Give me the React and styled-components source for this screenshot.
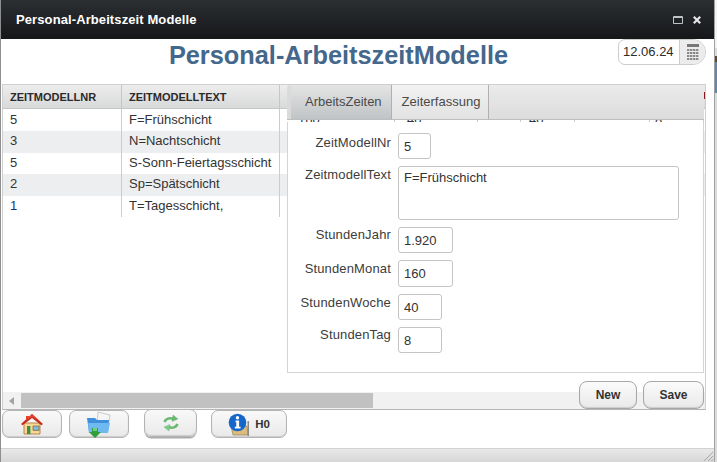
import React from 'react'
import styled, { createGlobalStyle } from 'styled-components'

const rows = [
  { nr: '5', text: 'F=Frühschicht', height: 22, line: 21, extra: ['160', '40', '', '40', '', '8'] },
  { nr: '3', text: 'N=Nachtschicht', height: 22, line: 20 },
  { nr: '5', text: 'S-Sonn-Feiertagsschicht', height: 21, line: 20 },
  { nr: '2', text: 'Sp=Spätschicht', height: 22, line: 20 },
  { nr: '1', text: 'T=Tagesschicht,', height: 21, line: 20, blue: true },
]

// columns that run on behind the tab panel
const hiddenColumns = [
  { width: 115, pad: 18 },
  { width: 83, pad: 12 },
  { width: 43, pad: 0 },
  { width: 54, pad: 8 },
  { width: 75, pad: 0 },
  { width: 54, pad: 5 },
]

const fields = [
  { label: 'ZeitModellNr', value: '5', width: 33, height: 26, labelTop: 2 },
  { label: 'ZeitmodellText', value: 'F=Frühschicht', width: 281, height: 54, area: true, labelTop: 1 },
  { label: 'StundenJahr', value: '1.920', width: 55, height: 26, labelTop: 0 },
  { label: 'StundenMonat', value: '160', width: 55, height: 27, labelTop: 1 },
  { label: 'StundenWoche', value: '40', width: 44, height: 26, labelTop: 1 },
  { label: 'StundenTag', value: '8', width: 44, height: 26, labelTop: 0 },
]

const GlobalStyle = createGlobalStyle`
  html, body {
    margin: 0;
    padding: 0;
    background: #fff;
    overflow: hidden;
  }
  body {
    font-family: "Liberation Sans", Arial, sans-serif;
    font-size: 13px;
    color: #333;
  }
`

const Page = styled.div`
  width: 717px;
  height: 462px;
  display: flex;
  background: #fff;
`

const Window = styled.div`
  width: 715px;
  height: 462px;
  flex: none;
  display: flex;
  flex-direction: column;
  box-sizing: border-box;
  border-left: 1px solid #8e8e8e;
  border-right: 1px solid #a0a0a0;
  background: #fff;
`

const Neighbour = styled.div`
  flex: 1;
  background: linear-gradient(
    #f4f4f4 0 48px,
    #dcdcdc 48px 56px,
    #5b4a2a 56px 62px,
    #5f86ad 62px 93px,
    #dcdcdc 93px
  );
`

const TitleBar = styled.div`
  height: 39px;
  flex: none;
  display: flex;
  align-items: center;
  justify-content: space-between;
  padding: 0 13px 0 15px;
  background: linear-gradient(#2c2f32, #151719);
  color: #fff;
  font-size: 13px;
  font-weight: bold;
  letter-spacing: 0.1px;
`

const WindowControls = styled.div`
  display: flex;
  align-items: center;
  gap: 10px;
`

const Heading = styled.div`
  height: 45px;
  flex: none;
  position: relative;
  display: flex;
  justify-content: center;
  box-sizing: border-box;
  padding-right: 38px;
  h1 {
    margin: 1px 0 0;
    font-size: 25.33px;
    line-height: 30px;
    font-weight: bold;
    color: #44688c;
  }
`

const DateBox = styled.div`
  position: absolute;
  left: 617px;
  top: 0;
  width: 88px;
  height: 26px;
  display: flex;
  box-sizing: border-box;
  border: 1px solid #ccc;
  border-radius: 7px 13px 13px 7px;
  overflow: hidden;
  background: #fff;
`

const DateText = styled.div`
  flex: 1;
  padding-left: 4px;
  line-height: 24px;
  font-size: 13px;
  color: #2c2c2c;
`

const DateButton = styled.div`
  width: 25px;
  border-left: 1px solid #ccc;
  background: #ececec;
  display: flex;
  align-items: center;
  justify-content: center;
`

const Content = styled.div`
  position: relative;
  flex: 1;
  min-height: 0;
  padding-left: 1px;
`

const Grid = styled.div`
  width: 704px;
  height: 326px;
  box-sizing: border-box;
  border: 1px solid #cfcfcf;
  border-bottom: 1px solid #b5b5b5;
  display: flex;
  flex-direction: column;
  overflow: hidden;
`

const GridHead = styled.div`
  height: 23px;
  flex: none;
  display: flex;
  background: linear-gradient(#ededed, #d8d9da);
  border-bottom: 1px solid #c6c6c6;
`

const HeadCell = styled.div`
  width: ${(p) => p.$width}px;
  flex: none;
  box-sizing: border-box;
  padding-left: 7px;
  border-right: 1px solid #c6c6c6;
  font-size: 11px;
  font-weight: bold;
  line-height: 24px;
  color: #2a2a2a;
  white-space: nowrap;
`

const HeadFiller = styled.div`
  width: 424px;
  flex: none;
`

const HeadMark = styled.div`
  width: 2px;
  height: 7px;
  margin-top: 7px;
  flex: none;
  background: #8a1c1c;
`

const GridBody = styled.div`
  flex: 1;
  min-height: 0;
`

const GridRow = styled.div`
  height: ${(p) => p.$height}px;
  display: flex;
  background: ${(p) => (p.$odd ? '#edeef0' : '#fff')};
`

const Cell = styled.div`
  width: ${(p) => p.$width}px;
  flex: none;
  box-sizing: border-box;
  padding-left: ${(p) => p.$pad ?? 7}px;
  border-right: 1px solid #ccc;
  font-size: 13px;
  line-height: ${(p) => p.$line}px;
  color: ${(p) => (p.$blue ? '#1a2f7a' : '#333')};
  white-space: nowrap;
`

const ScrollTrack = styled.div`
  height: 17px;
  flex: none;
  display: flex;
  align-items: center;
  background: #f1f1f1;
`

const ScrollArrow = styled.div`
  width: 0;
  height: 0;
  margin: 0 6px 0 6px;
  border-style: solid;
  border-width: 4px 5px 4px 0;
  border-color: transparent #a3a3a3 transparent transparent;
`

const ScrollThumb = styled.div`
  width: 352px;
  height: 15px;
  margin-left: 1px;
  background: #c1c1c1;
`

const Panel = styled.div`
  position: absolute;
  left: 286px;
  top: 1px;
  width: 417px;
  height: 288px;
  display: flex;
  flex-direction: column;
`

const TabStrip = styled.div`
  height: 34px;
  flex: none;
  display: flex;
  background: linear-gradient(#ebebeb, #dcdcdc);
  border-bottom: 1px solid #bdbdbd;
`

const Tab = styled.div`
  box-sizing: border-box;
  padding: ${(p) => (p.$active ? '0 9px 0 14px' : '0 8px 0 10px')};
  line-height: 34px;
  font-size: 13px;
  border-right: 1px solid #b0b0b0;
  color: #4a4a4a;
  background: ${(p) =>
    p.$active
      ? 'linear-gradient(#e4e4e4, #c0c4c6)'
      : 'linear-gradient(#f2f2f2, #e2e2e2)'};
  ${(p) => p.$active && 'border-left: 4px solid #dadada; border-radius: 4px 0 0 0;'}
`

const TabBody = styled.div`
  flex: 1;
  min-height: 0;
  margin-top: 2px;
  box-sizing: border-box;
  background: #fff;
  border: 1px solid #d4d4d4;
  border-top: none;
  padding-top: 11px;
  display: flex;
  flex-direction: column;
  gap: 7px;
`

const FormRow = styled.div`
  display: grid;
  grid-template-columns: 103px 1fr;
  column-gap: 7px;
  align-items: start;
`

const Label = styled.div`
  text-align: right;
  font-size: 13px;
  letter-spacing: 0.15px;
  padding-top: ${(p) => p.$top}px;
  color: #3c3c3c;
`

const Field = styled.div`
  width: ${(p) => p.$width}px;
  height: ${(p) => p.$height}px;
  box-sizing: border-box;
  border: 1px solid #c4c4c4;
  border-radius: 3px;
  padding: ${(p) => (p.$area ? '3px 5px' : '5px 5px')};
  font-size: 13px;
  line-height: 15px;
  color: #333;
`

const Actions = styled.div`
  position: absolute;
  right: 10px;
  top: 297px;
  display: flex;
  gap: 6px;
`

const ActionButton = styled.button`
  width: ${(p) => p.$width}px;
  height: 28px;
  padding: 0;
  border: 1px solid #a8a8a8;
  border-radius: 8px;
  background: linear-gradient(#fbfbfb, #e9e9e9);
  box-shadow: inset 0 -1px 1px #ccc;
  font-family: inherit;
  font-size: 12px;
  font-weight: bold;
  color: #333;
`

const Toolbar = styled.div`
  height: 38px;
  flex: none;
  display: flex;
  align-items: flex-start;
  padding-left: 1px;
  box-sizing: border-box;
`

const ToolButton = styled.div`
  width: ${(p) => p.$width}px;
  height: 28px;
  margin: ${(p) => (p.$raised ? '-1px' : '0')} ${(p) => p.$gap}px 0 0;
  flex: none;
  box-sizing: border-box;
  border: 1px solid #b4b4b4;
  border-radius: 7px;
  background: linear-gradient(#f9f9f9, #e9e9e9);
  box-shadow: inset 0 -1px 1px #ccc ${(p) => (p.$raised ? ', 0 2px 0 -0.5px #aaa' : '')};
  display: flex;
  align-items: center;
  justify-content: center;
  gap: 5px;
  font-size: 11.5px;
  font-weight: bold;
  color: #333;
`

const StatusBar = styled.div`
  height: 14px;
  flex: none;
  box-sizing: border-box;
  border-top: 1px solid #d2d2d2;
  background: linear-gradient(#e9e9e9, #d6d6d6);
  display: flex;
  justify-content: flex-end;
  align-items: flex-end;
`

const HomeIcon = () => (
  <svg width="24" height="22" viewBox="0 0 24 22">
    <path d="M4 10h16v11H4z" fill="#f7d99a" stroke="#a8702f" strokeWidth="0.8" />
    <path d="M12 1 23 11l-1.6 1.2L12 5 2.6 12.2 1 11z" fill="#c92a1a" />
    <path d="M6 6.5V3h3v1.2L12 1l7 6.5-7-3.4-7 3.4z" fill="#e4432d" />
    <path d="M7 13h3.4v8H7z" fill="#3c8f3f" />
    <path d="M13 13h6v4.4h-6z" fill="#76bde8" stroke="#9c682a" strokeWidth="0.8" />
  </svg>
)

const FolderIcon = () => (
  <svg width="26" height="27" viewBox="0 0 26 27">
    <path d="M12 1l12 3-2 13-11-3z" fill="#f5f5f5" stroke="#b8b8b8" strokeWidth="0.7" />
    <path d="M1 7h8l2 2h12l-1 12H3z" fill="#3f8fdc" />
    <path d="M2 12h22l-2 10H3z" fill="#6fb9f1" />
    <path d="M6 17h6v4h3l-6 6-6-6h3z" fill="#2f9e3c" />
    <path d="M7 17h4v3H7z" fill="#74cf7c" />
  </svg>
)

const RefreshIcon = () => (
  <svg width="18" height="18" viewBox="0 0 18 18" fill="none" stroke="#68b870" strokeWidth="2.6">
    <path d="M2.5 8C3.6 4.6 7.6 3.4 11.5 5" />
    <path d="M15.5 10c-1.1 3.4-5.1 4.6-9 3" />
    <path d="M11 1l5 4-6 2.5z" fill="#68b870" strokeWidth="0.4" />
    <path d="M7 17l-5-4 6-2.5z" fill="#7fc886" strokeWidth="0.4" />
  </svg>
)

const InfoIcon = () => (
  <svg width="22" height="23" viewBox="0 0 22 23">
    <path d="M3 13h16l1 9H5z" fill="#dcbc7e" stroke="#9a8355" strokeWidth="0.7" />
    <path d="M19.5 8H21v15h-1.5z" fill="#8a8a8a" />
    <circle cx="9.5" cy="9.5" r="8.8" fill="#1466cc" />
    <circle cx="9.5" cy="4.8" r="1.7" fill="#fff" />
    <path d="M7.5 7.5h3.6v6.3h1.5v1.7H6.8v-1.7h1.5V9.2h-.8z" fill="#fff" />
  </svg>
)

const CalendarIcon = () => (
  <svg width="14" height="16" viewBox="0 0 14 16">
    <path d="M1 0h12v3H1z" fill="#777" />
    {[5, 8, 11, 14].map((y) =>
      [1, 4, 7, 10].map((x) => (
        <path key={`${x}-${y}`} d={`M${x} ${y}h2.4v2H${x}z`} fill="#8a8a8a" />
      ))
    )}
  </svg>
)

const Grip = () => (
  <svg width="11" height="11" viewBox="0 0 11 11" stroke="#a8a8a8" strokeWidth="1">
    <path d="M1 10 10 1M5 10l5-5M8.5 10 10 8.5" />
  </svg>
)

const App = () => {
  return (
    <Page>
      <GlobalStyle />
      <Window>
        <TitleBar>
          <span>Personal-Arbeitszeit Modelle</span>
          <WindowControls>
            <svg width="10" height="8" viewBox="0 0 10 8" fill="none" stroke="#bfc3c6">
              <path d="M.5.5h9v7h-9zM.5 1.5h9" />
            </svg>
            <svg width="8" height="8" viewBox="0 0 8 8" stroke="#e6e6e6" strokeWidth="2.2">
              <path d="M.8.8l6.4 6.4M7.2.8.8 7.2" />
            </svg>
          </WindowControls>
        </TitleBar>
        <Heading>
          <h1>Personal-ArbeitszeitModelle</h1>
          <DateBox>
            <DateText>12.06.24</DateText>
            <DateButton>
              <CalendarIcon />
            </DateButton>
          </DateBox>
        </Heading>
        <Content>
          <Grid>
            <GridHead>
              <HeadCell $width={119}>ZEITMODELLNR</HeadCell>
              <HeadCell $width={158}>ZEITMODELLTEXT</HeadCell>
              <HeadFiller />
              <HeadMark />
            </GridHead>
            <GridBody>
              {rows.map((row, index) => (
                <GridRow key={index} $odd={index % 2 === 1} $height={row.height}>
                  <Cell $width={119} $line={row.line} $blue={row.blue}>{row.nr}</Cell>
                  <Cell $width={158} $line={row.line}>{row.text}</Cell>
                  {hiddenColumns.map((col, i) => (
                    <Cell key={i} $width={col.width} $pad={col.pad} $line={row.line}>
                      {row.extra ? row.extra[i] : ''}
                    </Cell>
                  ))}
                </GridRow>
              ))}
            </GridBody>
            <ScrollTrack>
              <ScrollArrow />
              <ScrollThumb />
            </ScrollTrack>
          </Grid>
          <Panel>
            <TabStrip>
              <Tab $active>ArbeitsZeiten</Tab>
              <Tab>Zeiterfassung</Tab>
            </TabStrip>
            <TabBody>
              {fields.map((field) => (
                <FormRow key={field.label}>
                  <Label $top={field.labelTop}>{field.label}</Label>
                  <Field $width={field.width} $height={field.height} $area={field.area}>
                    {field.value}
                  </Field>
                </FormRow>
              ))}
            </TabBody>
          </Panel>
          <Actions>
            <ActionButton $width={58}>New</ActionButton>
            <ActionButton $width={61}>Save</ActionButton>
          </Actions>
        </Content>
        <Toolbar>
          <ToolButton $width={60} $gap={7}><HomeIcon /></ToolButton>
          <ToolButton $width={60} $gap={15}><FolderIcon /></ToolButton>
          <ToolButton $width={53} $gap={14} $raised><RefreshIcon /></ToolButton>
          <ToolButton $width={76} $gap={0}><InfoIcon />H0</ToolButton>
        </Toolbar>
        <StatusBar>
          <Grip />
        </StatusBar>
      </Window>
      <Neighbour />
    </Page>
  )
}

export default App
